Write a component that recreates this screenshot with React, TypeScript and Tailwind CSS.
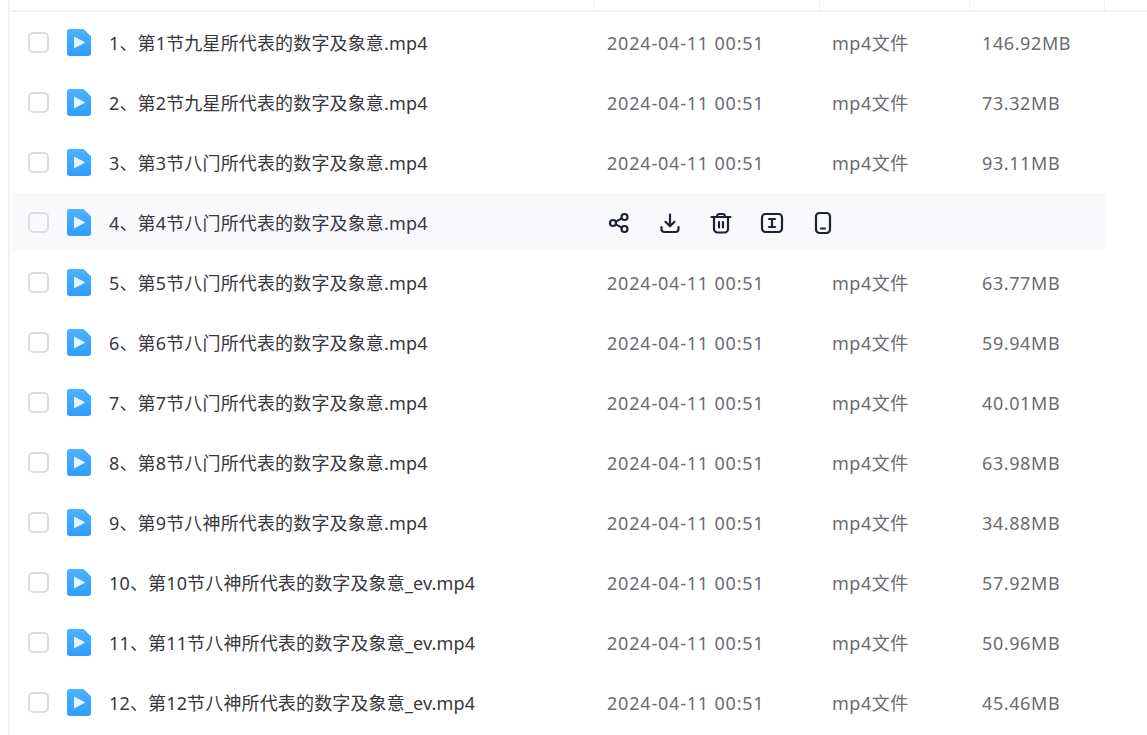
const files = [
  { name: '1、第1节九星所代表的数字及象意.mp4', size: '146.92MB' },
  { name: '2、第2节九星所代表的数字及象意.mp4', size: '73.32MB' },
  { name: '3、第3节八门所代表的数字及象意.mp4', size: '93.11MB' },
  { name: '4、第4节八门所代表的数字及象意.mp4', size: '', hover: true },
  { name: '5、第5节八门所代表的数字及象意.mp4', size: '63.77MB' },
  { name: '6、第6节八门所代表的数字及象意.mp4', size: '59.94MB' },
  { name: '7、第7节八门所代表的数字及象意.mp4', size: '40.01MB' },
  { name: '8、第8节八门所代表的数字及象意.mp4', size: '63.98MB' },
  { name: '9、第9节八神所代表的数字及象意.mp4', size: '34.88MB' },
  { name: '10、第10节八神所代表的数字及象意_ev.mp4', size: '57.92MB' },
  { name: '11、第11节八神所代表的数字及象意_ev.mp4', size: '50.96MB' },
  { name: '12、第12节八神所代表的数字及象意_ev.mp4', size: '45.46MB' },
];

function VideoIcon() {
  return (
    <svg width="24" height="27" viewBox="0 0 24 28" preserveAspectRatio="none" className="shrink-0 mb-[-1px]">
      <defs>
        <linearGradient id="videoFill" x1="0" y1="0" x2="0" y2="1">
          <stop offset="0" stopColor="#4db2ff" />
          <stop offset="1" stopColor="#2f9dff" />
        </linearGradient>
      </defs>
      <path
        d="M2.5 0H16.5L24 7.5V25.5A2.5 2.5 0 0 1 21.5 28H2.5A2.5 2.5 0 0 1 0 25.5V2.5A2.5 2.5 0 0 1 2.5 0Z"
        fill="url(#videoFill)"
      />
      <path d="M7.5 8.5L17.5 14L7.5 19.5Z" fill="#e8f5ff" strokeLinejoin="round" stroke="#e8f5ff" strokeWidth="1" />
    </svg>
  );
}

function ActionIcons() {
  const cls = 'w-[24px] h-[24px] text-[#1c2333]';
  return (
    <div className="flex items-center gap-[27px] mt-[1px]">
      <svg viewBox="0 0 24 24" fill="none" stroke="currentColor" strokeWidth="2.2" className={cls}>
        <circle cx="6" cy="12" r="3" />
        <circle cx="17.5" cy="6" r="3" />
        <circle cx="17.5" cy="18" r="3" />
        <path d="M8.7 10.6L14.8 7.4M8.7 13.4L14.8 16.6" />
      </svg>
      <svg viewBox="0 0 24 24" fill="none" stroke="currentColor" strokeWidth="2.2" strokeLinecap="round" strokeLinejoin="round" className={cls}>
        <path d="M12 3.5V15M7.5 10.8L12 15.2L16.5 10.8" />
        <path d="M3.5 16V18A3 3 0 0 0 6.5 21H17.5A3 3 0 0 0 20.5 18V16" />
      </svg>
      <svg viewBox="0 0 24 24" fill="none" stroke="currentColor" strokeWidth="2.2" strokeLinecap="round" strokeLinejoin="round" className={cls}>
        <path d="M2.5 6H21.5" />
        <path d="M8 5.5C8 3.5 9 3 10.5 3H13.5C15 3 16 3.5 16 5.5" />
        <path d="M5 6V18A3.5 3.5 0 0 0 8.5 21.5H15.5A3.5 3.5 0 0 0 19 18V6" />
        <path d="M10 11V16.5M14 11V16.5" />
      </svg>
      <svg viewBox="0 0 24 24" fill="none" stroke="currentColor" strokeWidth="2.2" strokeLinecap="round" strokeLinejoin="round" className={cls}>
        <rect x="2" y="3" width="20" height="18" rx="3.5" />
        <path d="M9 8H15M9 16H15M12 8V16" />
      </svg>
      <svg viewBox="0 0 24 24" fill="none" stroke="currentColor" strokeWidth="2.2" strokeLinecap="round" strokeLinejoin="round" className={cls}>
        <rect x="5" y="2" width="14" height="20" rx="3.5" />
        <path d="M10 17.5H14" />
      </svg>
    </div>
  );
}

export default function App() {
  return (
    <div className="w-[1147px] h-[735px] overflow-hidden bg-white font-['Noto_Sans','Noto_Sans_CJK_SC',sans-serif]">
      <div className="h-full ml-[8px] border-l-[2px] border-[#f2f2f4]">
        <div className="h-[12px] flex border-b-[2px] border-[#f2f2f5]">
          <div className="w-[585px] border-r-[1px] border-[#f0f0f2]" />
          <div className="w-[225px] border-r-[1px] border-[#f0f0f2]" />
          <div className="w-[150px] border-r-[1px] border-[#f0f0f2]" />
          <div className="w-[135px] border-r-[1px] border-[#f0f0f2]" />
        </div>
        <div className="flex flex-col gap-[2px] mt-[1px] ml-[2px] w-[1093px]">
          {files.map((f) => (
            <div
              key={f.name}
              className={`h-[58px] flex items-center shrink-0 ${f.hover ? 'bg-[#f9f9fc]' : ''}`}
            >
              <div className="w-[21px] h-[21px] ml-[16px] mr-[18px] rounded-[5px] border-[2px] border-[#dddddf] shrink-0" />
              <VideoIcon />
              <div className="w-[516px] pl-[18px] pt-[2px] text-[18px] tracking-[0.15px] text-[#37373c] whitespace-nowrap">{f.name}</div>
              {f.hover ? (
                <ActionIcons />
              ) : (
                <>
                  <div className="w-[225px] pt-[2px] text-[18px] tracking-[0.8px] text-[#6b6b72] whitespace-nowrap">2024-04-11 00:51</div>
                  <div className="w-[150px] pt-[2px] text-[18px] tracking-[0.5px] text-[#6b6b72] whitespace-nowrap">mp4文件</div>
                  <div className="pt-[2px] text-[18px] tracking-[0.6px] text-[#6b6b72] whitespace-nowrap">{f.size}</div>
                </>
              )}
            </div>
          ))}
        </div>
      </div>
    </div>
  );
}
